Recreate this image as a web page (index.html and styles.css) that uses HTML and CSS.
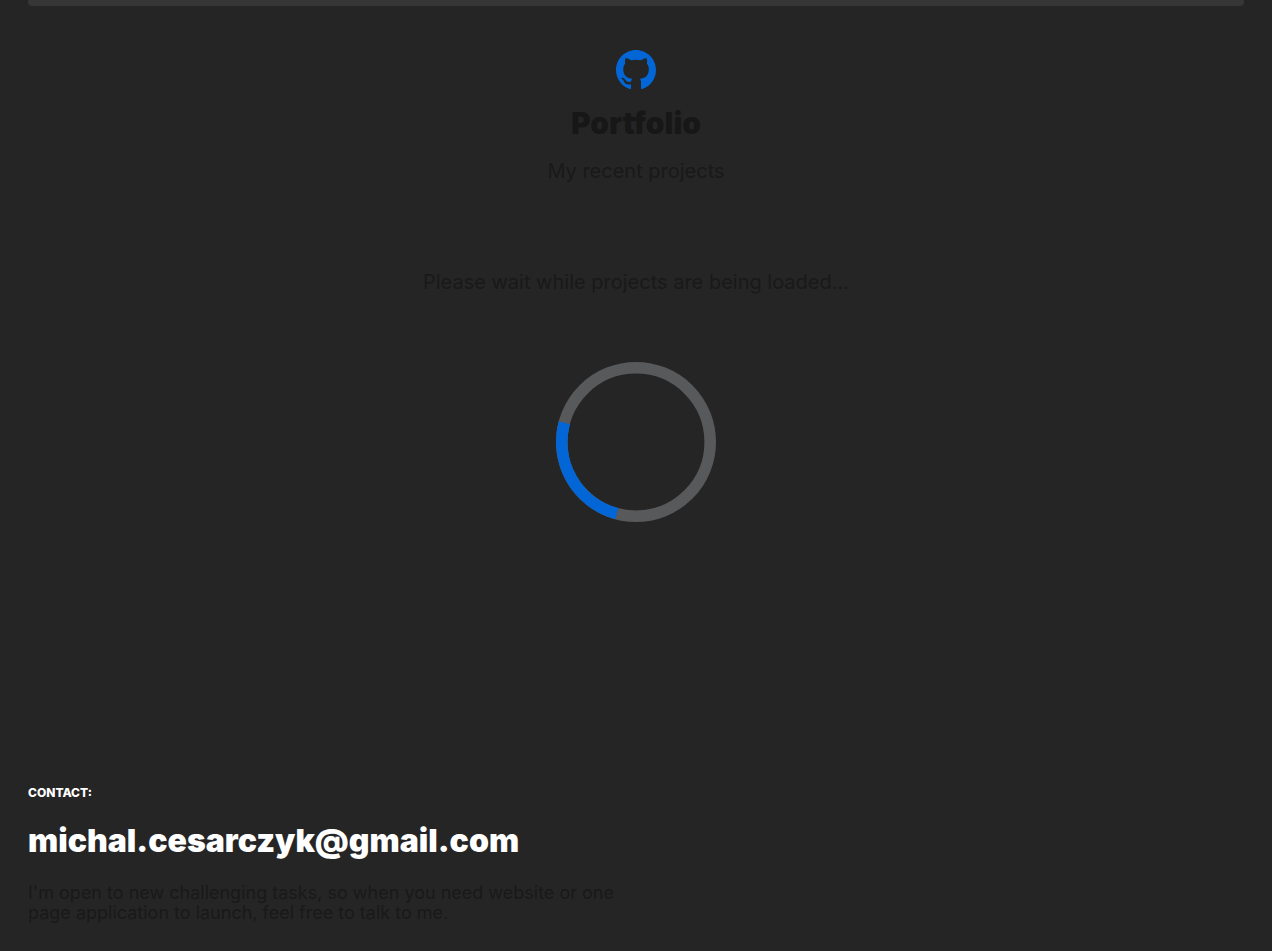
FILE: index.html
```html
<!DOCTYPE html>
<html lang="en">
<head>
<meta charset="utf-8">
<meta name="viewport" content="width=device-width, initial-scale=1">
<title>Portfolio</title>
<link rel="stylesheet" href="styles.css">
</head>
<body>
<div class="tile" aria-hidden="true"></div>
<main class="portfolio">
<header class="portfolio-header">
<svg class="logo" viewBox="0 0 16 16" aria-hidden="true"><path fill="currentColor" d="M8 0C3.58 0 0 3.58 0 8c0 3.54 2.29 6.53 5.47 7.59.4.07.55-.17.55-.38 0-.19-.01-.82-.01-1.49-2.01.37-2.53-.49-2.69-.94-.09-.23-.48-.94-.82-1.13-.28-.15-.68-.52-.01-.53.63-.01 1.08.58 1.23.82.72 1.21 1.87.87 2.33.66.07-.52.28-.87.51-1.07-1.78-.2-3.64-.89-3.64-3.95 0-.87.31-1.59.82-2.15-.08-.2-.36-1.02.08-2.12 0 0 .67-.21 2.2.82.64-.18 1.32-.27 2-.27s1.36.09 2 .27c1.53-1.04 2.2-.82 2.2-.82.44 1.1.16 1.92.08 2.12.51.56.82 1.27.82 2.15 0 3.07-1.87 3.75-3.65 3.95.29.25.54.73.54 1.48 0 1.07-.01 1.93-.01 2.2 0 .21.15.46.55.38A8.01 8.01 0 0 0 16 8c0-4.42-3.58-8-8-8z"/></svg>
<h1 class="title">Portfolio</h1>
<p class="lead">My recent projects</p>
</header>
<section class="loading" role="status">
<p class="lead">Please wait while projects are being loaded...</p>
<svg class="spinner" viewBox="0 0 160 160" aria-hidden="true"><circle class="ring" cx="80" cy="80" r="74.2"/><path class="arc" d="M60.8 151.67A74.2 74.2 0 0 1 8.33 60.8"/></svg>
</section>
</main>
<footer class="contact">
<h2 class="contact-label">CONTACT:</h2>
<a class="email" href="mailto:michal.cesarczyk@gmail.com">michal.cesarczyk@gmail.com</a>
<p class="note">I'm open to new challenging tasks, so when you need website or one page application to launch, feel free to talk to me.</p>
</footer>
</body>
</html>
```
FILE: styles.css
```css
* { box-sizing: border-box; }
body {
  margin: 0;
  padding: 0 28px;
  background: #252525;
  color: #171717;
  font-family: Inter, "Liberation Sans", sans-serif;
}
h1, h2, p { margin: 0; }
.tile {
  height: 6px;
  background: #363636;
  border-radius: 0 0 4px 4px;
}
.portfolio-header {
  display: flex;
  flex-direction: column;
  align-items: center;
  padding-top: 44px;
}
.logo {
  width: 40px;
  height: 40px;
  color: #0366d6;
}
.title {
  margin-top: 15px;
  font-size: 30px;
  line-height: 36px;
  font-weight: 900;
}
.lead {
  font-size: 20px;
  line-height: 24px;
  font-weight: 400;
  color: #191919;
}
.portfolio-header .lead { margin-top: 18px; }
.loading {
  display: flex;
  flex-direction: column;
  align-items: center;
  gap: 68px;
  padding-top: 87px;
}
.spinner { width: 160px; height: 160px; }
.ring, .arc { fill: none; stroke-width: 11.6; }
.ring { stroke: #58595b; }
.arc { stroke: #0366d6; }
.contact {
  display: flex;
  flex-direction: column;
  align-items: flex-start;
  padding: 263px 0 27px;
}
.contact-label {
  font-size: 12px;
  line-height: 16px;
  font-weight: 800;
  color: #fff;
}
.email {
  margin-top: 20px;
  font-size: 32px;
  line-height: 40px;
  font-weight: 900;
  color: #fff;
  text-decoration: none;
}
.note {
  max-width: 608px;
  margin-top: 22px;
  font-size: 18px;
  line-height: 20px;
  font-weight: 400;
  color: #191919;
}
```
